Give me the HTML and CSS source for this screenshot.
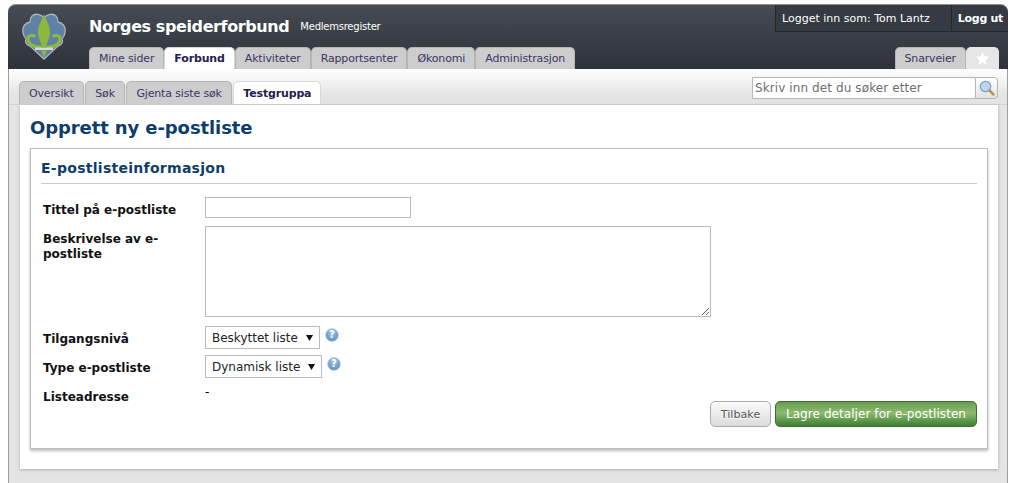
FILE: index.html
```html
<!DOCTYPE html>
<html lang="no">
<head>
<meta charset="utf-8">
<title>Opprett ny e-postliste</title>
<link rel="stylesheet" href="styles.css">
</head>
<body>
<div class="frame">
  <header class="header">
    <svg class="logo" viewBox="0 0 44 48" width="44" height="48" aria-hidden="true">
      <path d="M22 6C19 2 13 1 10 4 8 6 8 8 8 10 3 11 0 15 1 20c0 4 2 5 3 7-1 3 0 6 4 7l14 13 14-13c4-1 5-4 4-7 1-2 3-3 3-7 1-5-2-9-7-10 0-2 0-4-2-6-3-3-9-2-12 2z" fill="#5f81a6" stroke="#aab4bc" stroke-width="1.3"/>
      <path d="M22 2c2 6 6 12 6 18 0 6-3 9-3.500 15h-5C19 29 16 26 16 20c0-6 4-12 6-18z" fill="#8cb93c"/>
      <path d="M19 35C14 35 7 34 6 27c0-4 5-5 7-2M25 35c5 0 12-1 13-8 0-4-5-5-7-2" fill="none" stroke="#8cb93c" stroke-width="3"/>
      <path d="M13 35.500h18v2.500H13z" fill="#d5dcc8"/>
      <path d="M19 38.500h6L22 45.500z" fill="#8cb93c"/>
    </svg>
    <div class="header-main">
      <div class="brand">
        <span class="brand-name">Norges speiderforbund</span>
        <span class="brand-sub">Medlemsregister</span>
      </div>
      <nav class="main-tabs">
        <div class="tab-group">
          <a class="tab">Mine sider</a>
          <a class="tab active">Forbund</a>
          <a class="tab">Aktiviteter</a>
          <a class="tab">Rapportsenter</a>
          <a class="tab">Økonomi</a>
          <a class="tab">Administrasjon</a>
        </div>
        <div class="tab-group">
          <a class="tab">Snarveier</a>
          <a class="tab star-tab">
            <svg viewBox="0 0 16 16" width="15" height="15" aria-hidden="true"><path d="M8 .8l2.200 4.700 5.100.6-3.800 3.500 1 5.100L8 12.200l-4.500 2.500 1-5.100L.7 6.100l5.100-.6z" fill="#fff"/></svg>
          </a>
        </div>
      </nav>
    </div>
    <div class="user-box">
      <span class="user-name">Logget inn som: Tom Lantz</span>
      <span class="logout">Logg ut</span>
    </div>
  </header>

  <div class="sub-bar">
    <nav class="sub-tabs">
      <a class="tab sub">Oversikt</a>
      <a class="tab sub">Søk</a>
      <a class="tab sub">Gjenta siste søk</a>
      <a class="tab sub active">Testgruppa</a>
    </nav>
    <div class="search">
      <input class="search-input" type="text" placeholder="Skriv inn det du søker etter">
      <button class="search-btn" type="button" aria-label="Søk">
        <svg viewBox="0 0 16 16" width="16" height="16" aria-hidden="true">
          <circle cx="6.500" cy="6.500" r="5.200" fill="#bcd6ee" stroke="#7fa3c7" stroke-width="1.300"/>
          <path d="M10.600 10.600l3.800 3.800" stroke="#b98f55" stroke-width="2.600" stroke-linecap="round"/>
        </svg>
      </button>
    </div>
  </div>

  <main class="panel">
    <h1 class="title">Opprett ny e-postliste</h1>
    <section class="card">
      <h2 class="card-title">E-postlisteinformasjon</h2>
      <form class="form">
        <label class="lbl">Tittel på e-postliste</label>
        <div class="fld"><input class="text-input" type="text"></div>
        <label class="lbl">Beskrivelse av e-postliste</label>
        <div class="fld"><textarea class="textarea"></textarea></div>
        <label class="lbl">Tilgangsnivå</label>
        <div class="fld sel-row">
          <select class="select sel-a"><option>Beskyttet liste</option></select>
          <span class="help">?</span>
        </div>
        <label class="lbl">Type e-postliste</label>
        <div class="fld sel-row">
          <select class="select sel-b"><option>Dynamisk liste</option></select>
          <span class="help">?</span>
        </div>
        <label class="lbl">Listeadresse</label>
        <div class="fld addr">-</div>
      </form>
      <div class="actions">
        <button class="btn btn-back" type="button">Tilbake</button>
        <button class="btn btn-save" type="button">Lagre detaljer for e-postlisten</button>
      </div>
    </section>
  </main>
</div>
</body>
</html>
```

FILE: styles.css
```css
* { box-sizing: border-box; }
html, body { margin: 0; padding: 0; height: 483px; overflow: hidden; background: #fff; }
body { padding: 4px 7px 0 8px; font-family: "DejaVu Sans", Verdana, sans-serif; font-size: 11px; color: #000; }

.frame {
  height: 479px;
  background: #e4e4e4;
  border-left: 1px solid #a0a09a;
  border-right: 1px solid #a0a09a;
  border-radius: 8px 8px 0 0;
}

.header {
  position: relative;
  display: flex;
  height: 65px;
  margin: 0 -1px;
  background: linear-gradient(#464c54, #2e3138);
  border-top: 1px solid #8f8f8a;
  border-radius: 8px 8px 0 0;
}
.logo { flex: none; margin: 7px 0 0 14px; }
.header-main { flex: 1; display: flex; flex-direction: column; margin-left: 23px; padding-right: 9px; min-width: 0; }
.brand { display: flex; align-items: center; gap: 11px; margin-top: 6px; height: 30px; color: #fff; }
.brand-name { font-size: 16px; font-weight: 700; letter-spacing: -0.4px; }
.brand-sub { font-size: 10px; margin-top: 1px; letter-spacing: -0.23px; }

.main-tabs { display: flex; justify-content: space-between; align-items: flex-end; height: 28px; }
.tab-group { display: flex; }
.tab {
  display: flex;
  align-items: center;
  justify-content: center;
  height: 22px;
  padding: 0 9px;
  background: #cdcdcd;
  color: #3b3563;
  border: 1px solid #b5b5b5;
  border-bottom: 0;
  border-radius: 5px 5px 0 0;
  letter-spacing: -0.15px;
  white-space: nowrap;
}
.tab.active { background: #fff; color: #24204d; font-weight: 700; border-color: #d8d8d8; }
.star-tab { width: 33px; padding: 0; background: #e6e6e6; border-color: #e6e6e6; }

.user-box {
  position: absolute;
  top: 0;
  right: 0;
  display: flex;
  height: 27px;
  background: #363a42;
  color: #fff;
  border-bottom: 1px solid #23262b;
  border-radius: 0 8px 0 0;
}
.user-name { display: flex; align-items: center; padding: 0 21px 0 6px; border-left: 1px solid #23262b; white-space: nowrap; }
.logout { display: flex; align-items: center; padding: 0 5px 0 6px; border-left: 1px solid #23262b; font-weight: 700; letter-spacing: -0.3px; white-space: nowrap; }

.sub-bar {
  display: flex;
  justify-content: space-between;
  height: 36px;
  padding: 0 9px 0 10px;
  background: linear-gradient(#fff 0, #e4e4e4 26px);
  border-bottom: 1px solid #d0d0d0;
}
.sub-tabs { display: flex; align-items: flex-end; gap: 1.5px; }
.tab.sub { height: 23px; }

.search { display: flex; margin-top: 8px; height: 22px; }
.search-input {
  width: 223px;
  height: 22px;
  padding: 0 2px;
  font: 12px "DejaVu Sans", Verdana, sans-serif;
  letter-spacing: 0.1px;
  border: 1px solid #b5b5b5;
  border-right: 0;
  background: #fff;
}
.search-input::placeholder { color: #6e6e6e; opacity: 1; }
.search-btn {
  display: flex;
  align-items: center;
  justify-content: center;
  width: 23px;
  height: 22px;
  padding: 0;
  border: 1px solid #b5b5b5;
  border-radius: 0 4px 4px 0;
  background: linear-gradient(#fff, #e2e2e2);
}

.panel {
  height: 364px;
  margin: 0 9px 0 11px;
  padding: 10px 10px 0;
  background: #fff;
  box-shadow: 0 1px 3px #aaa;
}
.title { margin: 0 0 8px; height: 25px; font-size: 18px; line-height: 25px; font-weight: 700; color: #0f3d6b; letter-spacing: -0.1px; }

.card {
  height: 301px;
  padding: 0 10px;
  background: #fff;
  border: 1px solid #bdbdbd;
  box-shadow: 0 2px 3px #bbb;
}
.card-title {
  margin: 0;
  height: 35px;
  font-size: 14px;
  line-height: 38px;
  font-weight: 700;
  color: #0f3d6b;
  letter-spacing: 0.28px;
  border-bottom: 1px solid #ccc;
}

.form {
  display: grid;
  grid-template-columns: 162px 1fr;
  padding: 13px 0 0 2px;
}
.lbl { font-size: 12px; font-weight: 700; line-height: 15px; color: #111; padding: 6px 10px 0 0; }
.fld { min-width: 0; }

.text-input { display: block; width: 206px; height: 21px; border: 1px solid #bbb; background: #fff; margin-bottom: 8px; }
.textarea { display: block; width: 506px; height: 91px; border: 1px solid #bbb; background: #fff; margin-bottom: 9px; }

.sel-row { display: flex; align-items: flex-start; gap: 5px; height: 29px; }
.select {
  appearance: none;
  height: 23px;
  padding: 0 2px 0 6px;
  font: 12px "DejaVu Sans", Verdana, sans-serif;
  color: #222;
  background: #fff url("data:image/svg+xml,%3Csvg xmlns='http://www.w3.org/2000/svg' width='7' height='6'%3E%3Cpath d='M0 0h7L3.500 6z' fill='%23111'/%3E%3C/svg%3E") no-repeat right 6px center;
  border: 1px solid #bbb;
  border-radius: 0;
}
.sel-a { width: 115px; }
.sel-b { width: 117px; }
.help {
  display: flex;
  align-items: center;
  justify-content: center;
  width: 14px;
  height: 14px;
  margin-top: 2px;
  border-radius: 50%;
  background: radial-gradient(circle at 50% 30%, #a8c6e6, #4f82bc);
  border: 1px solid #c2d6ea;
  color: #fff;
  font-size: 10px;
  font-weight: 700;
  line-height: 1;
}
.addr { font-size: 12px; line-height: 12px; padding-top: 2px; }

.actions { display: flex; justify-content: flex-end; gap: 4px; margin-top: -4px; }
.btn {
  height: 26px;
  padding: 0;
  font: 11px "DejaVu Sans", Verdana, sans-serif;
  border-radius: 5px;
  cursor: pointer;
}
.btn-back { width: 61px; color: #555; letter-spacing: 0.1px; background: linear-gradient(#fafafa, #dcdcdc); border: 1px solid #aaa; text-shadow: 0 1px 0 #fff; }
.btn-save { width: 202px; color: #fff; font-size: 12px; letter-spacing: 0.07px; background: linear-gradient(#689c52, #8dbb6e 45%, #3f7d36); border: 1px solid #3d6d33; }
```
